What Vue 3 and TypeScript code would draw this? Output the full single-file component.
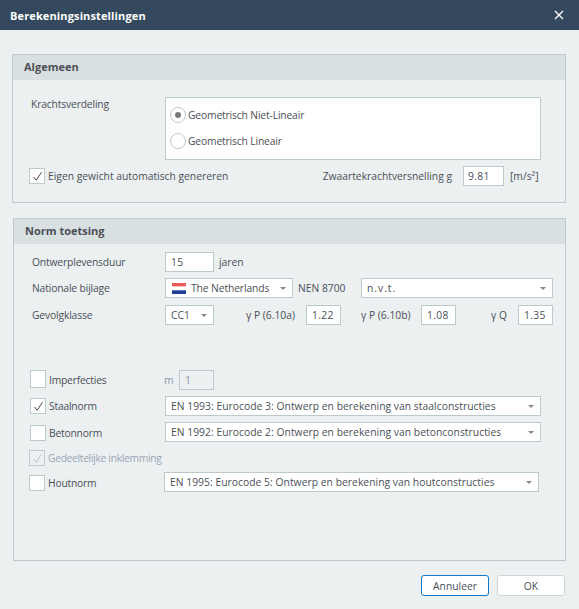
<script setup lang="ts">
const checkPath = 'M1.5 6L4.2 9.2L9.5 1.2'
</script>

<template>
  <div class="dialog">
    <header class="titlebar">
      <span class="title">Berekeningsinstellingen</span>
      <svg class="close" width="10" height="10" viewBox="0 0 10 10"><path d="M1 1L9 9M9 1L1 9" stroke="#fff" stroke-width="1.3" fill="none" /></svg>
    </header>

    <main class="content">
      <section class="panel first">
        <h2 class="panel-head">Algemeen</h2>
        <div class="panel-body algemeen">
          <div class="row force">
            <span class="label lbl-force">Krachtsverdeling</span>
            <div class="listbox">
              <div class="radio-row">
                <span class="radio on"><i></i></span>
                <span>Geometrisch Niet-Lineair</span>
              </div>
              <div class="radio-row">
                <span class="radio"></span>
                <span>Geometrisch Lineair</span>
              </div>
            </div>
          </div>
          <div class="row gravity">
            <span class="check">
              <svg width="11" height="11" viewBox="0 0 11 11"><path :d="checkPath" stroke="#444" stroke-width="1" fill="none" /></svg>
            </span>
            <span class="check-text">Eigen gewicht automatisch genereren</span>
            <span class="grav-label">Zwaartekrachtversnelling g</span>
            <span class="field grav-field">9.81</span>
            <span class="unit">[m/s²]</span>
          </div>
        </div>
      </section>

      <section class="panel second">
        <h2 class="panel-head">Norm toetsing</h2>
        <div class="panel-body norm">
          <div class="row r-life">
            <span class="label col-label">Ontwerplevensduur</span>
            <span class="field w49">15</span>
            <span class="after">jaren</span>
          </div>
          <div class="row r-annex">
            <span class="label col-label">Nationale bijlage</span>
            <span class="select w128 flag-select">
              <svg class="flag" width="14" height="11" viewBox="0 0 14 11">
                <rect width="14" height="3.6" fill="#ee5a55" />
                <rect y="3.6" width="14" height="3.7" fill="#fff" />
                <rect y="7.3" width="14" height="3.7" fill="#1c3f94" />
              </svg>
              <span class="sel-text">The Netherlands</span>
              <i class="caret"></i>
            </span>
            <span class="nen">NEN 8700</span>
            <span class="select w192"><span class="sel-text spaced">n.v.t.</span><i class="caret"></i></span>
          </div>
          <div class="row r-class">
            <span class="label col-label">Gevolgklasse</span>
            <span class="select w49"><span class="sel-text">CC1</span><i class="caret"></i></span>
            <span class="gamma g1">γ P (6.10a)</span>
            <span class="field w35">1.22</span>
            <span class="gamma g2">γ P (6.10b)</span>
            <span class="field w35">1.08</span>
            <span class="gamma g3">γ Q</span>
            <span class="field w35">1.35</span>
          </div>

          <div class="row r-imp">
            <span class="check tall"></span>
            <span class="check-text name">Imperfecties</span>
            <span class="m">m</span>
            <span class="field disabled">1</span>
          </div>
          <div class="row r-staal">
            <span class="check">
              <svg width="11" height="11" viewBox="0 0 11 11"><path :d="checkPath" stroke="#444" stroke-width="1" fill="none" /></svg>
            </span>
            <span class="check-text name">Staalnorm</span>
            <span class="select w376"><span class="sel-text">EN 1993: Eurocode 3: Ontwerp en berekening van staalconstructies</span><i class="caret"></i></span>
          </div>
          <div class="row r-beton">
            <span class="check low"></span>
            <span class="check-text name low">Betonnorm</span>
            <span class="select w376"><span class="sel-text">EN 1992: Eurocode 2: Ontwerp en berekening van betonconstructies</span><i class="caret"></i></span>
          </div>
          <div class="row r-gedeelt">
            <span class="check check-off">
              <svg width="11" height="11" viewBox="0 0 11 11"><path :d="checkPath" stroke="#b9c3c6" stroke-width="1" fill="none" /></svg>
            </span>
            <span class="check-text off">Gedeeltelijke inklemming</span>
          </div>
          <div class="row r-hout">
            <span class="check low"></span>
            <span class="check-text name low">Houtnorm</span>
            <span class="select w375"><span class="sel-text">EN 1995: Eurocode 5: Ontwerp en berekening van houtconstructies</span><i class="caret"></i></span>
          </div>
        </div>
      </section>

      <footer class="actions">
        <button class="btn primary" type="button">Annuleer</button>
        <button class="btn" type="button">OK</button>
      </footer>
    </main>
  </div>
</template>

<style>
html, body { margin: 0; padding: 0; background: #ecf0f1; }
</style>

<style scoped>
.dialog {
  width: 579px;
  height: 609px;
  display: flex;
  flex-direction: column;
  background: #ecf0f1;
  color: #4a4f57;
  font-family: "Open Sans", "Noto Sans", sans-serif;
  font-size: 10.3px;
  overflow: hidden;
}
.titlebar {
  height: 30px;
  flex: none;
  display: flex;
  align-items: center;
  justify-content: space-between;
  background: #34495e;
  color: #fff;
  padding: 0 15px 0 10px;
  box-sizing: border-box;
}
.title { font-weight: 700; font-size: 11px; letter-spacing: .13px; }
.content { flex: 1; padding: 24px 13px 0 12px; display: flex; flex-direction: column; }
.panel { border: 1px solid #bccacb; box-sizing: border-box; }
.first { height: 149px; }
.second { height: 343px; margin-top: 15px; margin-left: 1px; }
.panel-head {
  margin: 0;
  height: 25px;
  line-height: 24px;
  background: #d9e0e2;
  font-size: 11px;
  font-weight: 700;
  color: #4b4f55;
  padding-left: 11px;
}
.row { display: flex; align-items: center; }
.label { flex: none; letter-spacing: -.15px; }
.algemeen { padding: 17px 24px 0 17px; }
.force { align-items: flex-start; }
.lbl-force { width: 134px; margin-left: 1px; line-height: 14px; }
.listbox {
  width: 376px;
  height: 63px;
  box-sizing: border-box;
  border: 1px solid #bccacb;
  background: #fff;
  padding: 0 4px;
  letter-spacing: -.15px;
}
.radio-row { display: flex; align-items: center; height: 26px; gap: 2px; }
.radio-row:first-child { margin-top: 4px; }
.radio {
  width: 16px;
  height: 16px;
  box-sizing: border-box;
  border-radius: 50%;
  border: 1px solid #bccacb;
  background: #fff;
  display: flex;
  align-items: center;
  justify-content: center;
  flex: none;
}
.radio i { width: 6px; height: 6px; border-radius: 50%; background: #777; }
.gravity { margin-top: 6px; height: 20px; margin-left: -1px; }
.check {
  width: 16px;
  height: 16px;
  flex: none;
  box-sizing: border-box;
  border: 1px solid #bccacb;
  background: #fff;
  display: flex;
  align-items: center;
  justify-content: center;
}
.check-text { margin-left: 3px; }
.grav-label { margin-left: auto; }
.field {
  box-sizing: border-box;
  height: 20px;
  border: 1px solid #bccacb;
  background: #fff;
  display: flex;
  align-items: center;
  padding-left: 5px;
  flex: none;
  letter-spacing: .3px;
}
.grav-field { width: 41px; margin-left: 11px; padding-left: 4px; }
.unit { margin-left: 6px; width: 31px; flex: none; }
.norm { padding: 8px 12px 0 16px; }
.col-label { width: 133px; margin-left: 2px; }
.w49 { width: 49px; }
.w35 { width: 35px; }
.after { margin-left: 5px; }
.r-annex { margin-top: 6px; }
.r-class { margin-top: 7px; }
.select {
  box-sizing: border-box;
  height: 20px;
  border: 1px solid #bccacb;
  background: #fff;
  display: flex;
  align-items: center;
  padding: 0 6px 0 5px;
  flex: none;
  color: #4a4f57;
  letter-spacing: .04px;
}
.sel-text { white-space: nowrap; }
.spaced { letter-spacing: 1px; }
.caret {
  margin-left: auto;
  width: 0;
  height: 0;
  border-left: 3.5px solid transparent;
  border-right: 3.5px solid transparent;
  border-top: 3.5px solid #888;
  flex: none;
}
.w128 { width: 128px; }
.w192 { width: 192px; }
.w376 { width: 376px; }
.w375 { width: 375px; }
.flag-select { padding-left: 6px; letter-spacing: -.1px; }
.flag { margin-right: 5px; flex: none; }
.nen { margin-left: 5px; width: 63px; flex: none; }
.gamma { flex: none; white-space: nowrap; }
.g1 { margin-left: 32px; width: 60px; }
.g2 { margin-left: 20px; width: 60px; }
.g3 { margin-left: 35px; width: 27px; }
.r-imp { margin-top: 45px; }
.tall { height: 18px; align-self: flex-start; }
.name { width: 116px; flex: none; letter-spacing: -.2px; }
.m { color: #8a98ab; width: 15px; flex: none; margin-left: -1px; }
.disabled { width: 35px; background: #ecf0f1; color: #8a98ab; }
.r-staal { margin-top: 6px; }
.r-beton { margin-top: 6px; }
.low { margin-top: 2px; }
.r-gedeelt { margin-top: 8px; height: 16px; }
.check-off { background: #ecf0f1; margin-left: -1px; }
.off { color: #9aa6b4; letter-spacing: -.32px; }
.r-hout { margin-top: 6px; margin-left: -1px; }
.actions {
  display: flex;
  justify-content: flex-end;
  gap: 8px;
  margin-top: 14px;
  margin-right: 1px;
}
.btn {
  width: 68px;
  height: 21px;
  box-sizing: border-box;
  border: 1px solid #ced4d6;
  border-radius: 3px;
  background: #fff;
  color: #4a4f57;
  font: inherit;
  padding: 0;
}
.primary { border-color: #0f78c8; }
</style>
